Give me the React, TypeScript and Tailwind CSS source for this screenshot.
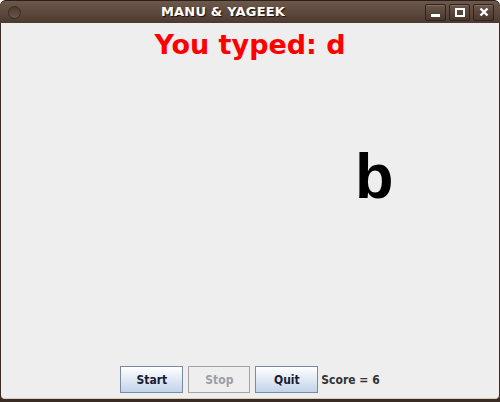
import React from 'react';

const font = { fontFamily: '"DejaVu Sans", sans-serif' };
const condensed = { fontFamily: '"DejaVu Sans Condensed", "DejaVu Sans", sans-serif' };

const WinButton = ({ children }: { children: React.ReactNode }) => (
  <div className="w-[21px] h-[17px] rounded-[2px] border border-[#2e231d] bg-gradient-to-b from-[#6a564a] to-[#4a382e] shadow-[inset_0_1px_0_rgba(255,255,255,0.15)] flex items-center justify-center">
    {children}
  </div>
);

const JButton = ({ label, disabled }: { label: string; disabled?: boolean }) => (
  <button
    style={condensed}
    className={
      disabled
        ? 'w-[62px] h-[27px] border border-[#a3a3a3] bg-[#eeeeee] text-[#9a9ea6] text-[12px] font-bold'
        : 'w-[63px] h-[27px] border border-[#7a8aa3] bg-gradient-to-b from-[#ffffff] to-[#c2d3e9] text-[#1a1a33] text-[12px] font-bold'
    }
  >
    {label}
  </button>
);

export default function App() {
  return (
    <div className="w-[500px] h-[402px] flex flex-col bg-[#3a2c24] rounded-t-[6px] overflow-hidden" style={font}>
      {/* Title bar */}
      <div className="relative h-[23px] shrink-0 bg-gradient-to-b from-[#6d584b] to-[#4d3a2f] rounded-t-[6px] border-t border-[#2a1f19] flex items-center px-[6px]">
        <div className="w-[13px] h-[13px] rounded-full border border-[#3a2a22] bg-gradient-to-b from-[#4d3a30] to-[#6a564a] ml-[2px]" />
        <div className="flex-1 text-center text-white font-bold text-[13px] [text-shadow:1px_1px_1px_#1a120e] tracking-[0.2px]">
          MANU &amp; YAGEEK
        </div>
        <div className="flex gap-[3px]">
          <WinButton>
            <div className="w-[9px] h-[3px] bg-white mt-[6px]" />
          </WinButton>
          <WinButton>
            <div className="w-[10px] h-[9px] border-2 border-white" />
          </WinButton>
          <WinButton>
            <svg width="10" height="10" viewBox="0 0 10 10">
              <path d="M1.5 1.5 L8.5 8.5 M8.5 1.5 L1.5 8.5" stroke="white" strokeWidth="2.4" />
            </svg>
          </WinButton>
        </div>
      </div>
      {/* Body */}
      <div className="flex-1 mx-[1px] mb-[3px] bg-[#eeeeee] flex flex-col rounded-b-[4px] border-b border-[#d9ccb8]">
        <div className="text-center text-[#ff0000] text-[27px] font-bold leading-[34px] mt-[5px]">You typed: d</div>
        <div className="relative flex-1">
          <span
            className="absolute left-[354px] top-[83px] text-[63px] font-bold leading-none text-black"
            style={{ fontFamily: '"Liberation Sans", Arial, sans-serif' }}
          >
            b
          </span>
        </div>
        <div className="flex justify-center items-center gap-[5px] pb-[5px]">
          <JButton label="Start" />
          <JButton label="Stop" disabled />
          <JButton label="Quit" />
          <span style={condensed} className="text-[12px] font-bold text-[#333333] ml-[-2px]">Score = 6</span>
        </div>
      </div>
    </div>
  );
}
